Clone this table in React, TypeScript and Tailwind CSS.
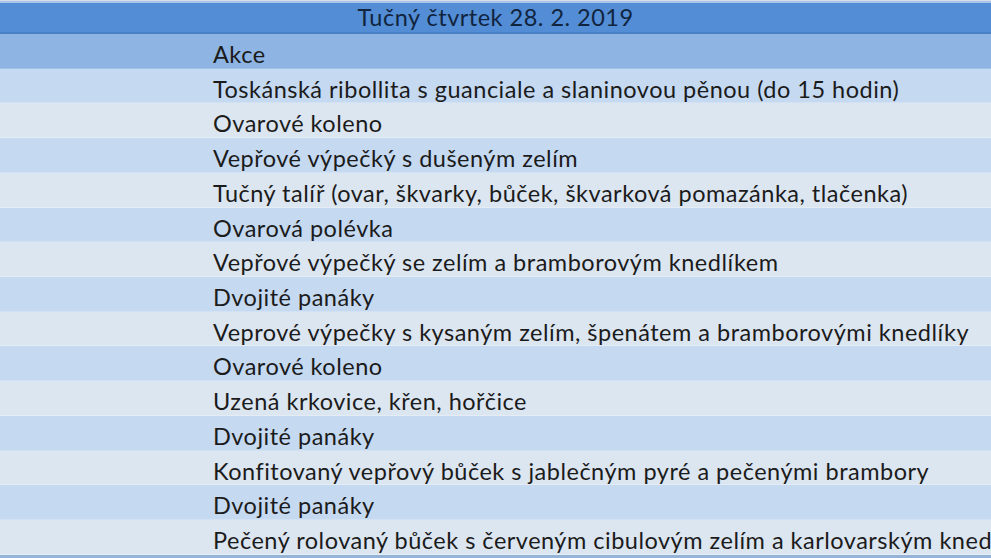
const items = [
  "Toskánská ribollita s guanciale a slaninovou pěnou (do 15 hodin)",
  "Ovarové koleno",
  "Vepřové výpečký s dušeným zelím",
  "Tučný talíř (ovar, škvarky, bůček, škvarková pomazánka, tlačenka)",
  "Ovarová polévka",
  "Vepřové výpečký se zelím a bramborovým knedlíkem",
  "Dvojité panáky",
  "Veprové výpečky s kysaným zelím, špenátem a bramborovými knedlíky",
  "Ovarové koleno",
  "Uzená krkovice, křen, hořčice",
  "Dvojité panáky",
  "Konfitovaný vepřový bůček s jablečným pyré a pečenými brambory",
  "Dvojité panáky",
  "Pečený rolovaný bůček s červeným cibulovým zelím a karlovarským knedlíkem",
];

export default function App() {
  return (
    <div className="w-[991px] h-[558px] overflow-hidden bg-white font-['Lato','Liberation_Sans',sans-serif] text-[23.5px] leading-none tracking-[0.5px] text-[#1b1b1b]">
      <div className="h-[1px] bg-[#d6dde6]" />
      <div className="h-[2px] bg-[#a9c4e8]" />
      <div className="h-[31px] bg-[#538dd5] border-b-2 border-[#4a80c6] pt-[3px] text-center text-[#10243e]">
        Tučný čtvrtek 28. 2. 2019
      </div>
      <div className="h-[34.73px] bg-[#8db4e2] border-b border-[#a3c2e8] pl-[213px] pt-[9px]">
        Akce
      </div>
      {items.map((item, i) => (
        <div
          key={i}
          className={
            "h-[34.73px] pl-[213px] pt-[9px] whitespace-nowrap border-b " +
            (i % 2 === 0 ? "bg-[#c5d9f1] border-[#d2e1f4]" : "bg-[#dce6f1] border-[#e4ecf5]")
          }
        >
          {item}
        </div>
      ))}
      <div className="h-[3px] bg-[#95b3d7]" />
    </div>
  );
}
